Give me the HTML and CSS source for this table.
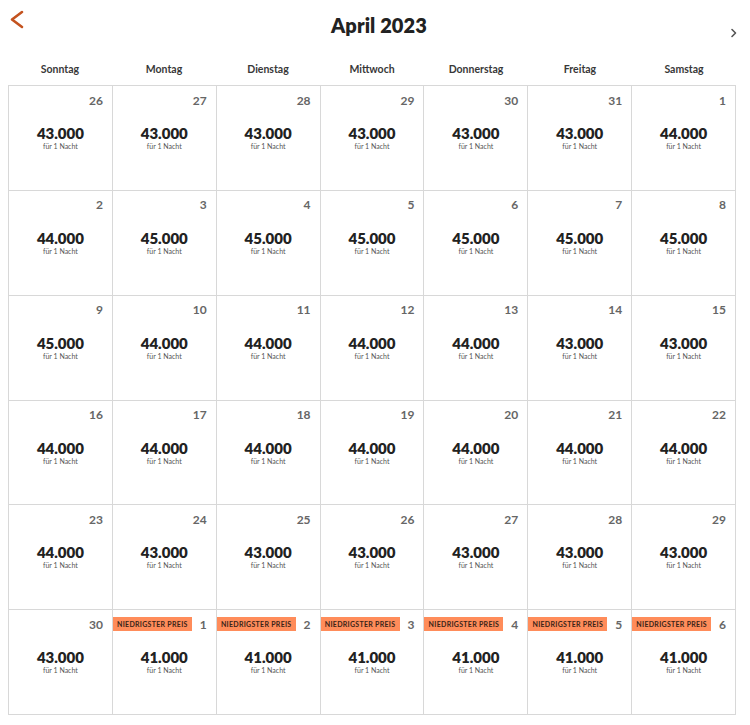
FILE: index.html
```html
<!DOCTYPE html>
<html lang="de">
<head>
<meta charset="utf-8">
<title>April 2023</title>
<link rel="stylesheet" href="styles.css">
</head>
<body>
<div class="cal">
  <div class="top">
    <button class="nav prev" aria-label="Vorheriger Monat">
      <svg width="16" height="20" viewBox="0 0 16 20"><polyline points="13,2 3,9.5 13,17" fill="none" stroke="#c4531f" stroke-width="2.6" stroke-linecap="round" stroke-linejoin="round"/></svg>
    </button>
    <h1 class="title">April 2023</h1>
    <button class="nav next" aria-label="Nächster Monat">
      <svg width="8" height="10" viewBox="0 0 8 10"><polyline points="2,1.5 5.5,5 2,8.5" fill="none" stroke="#555" stroke-width="1.6" stroke-linecap="round" stroke-linejoin="round"/></svg>
    </button>
  </div>
  <div class="weekdays">
    <div>Sonntag</div><div>Montag</div><div>Dienstag</div><div>Mittwoch</div><div>Donnerstag</div><div>Freitag</div><div>Samstag</div>
  </div>
  <div class="grid" id="grid"></div>
</div>
<script>
var data = [
  [26,"43.000"],[27,"43.000"],[28,"43.000"],[29,"43.000"],[30,"43.000"],[31,"43.000"],[1,"44.000"],
  [2,"44.000"],[3,"45.000"],[4,"45.000"],[5,"45.000"],[6,"45.000"],[7,"45.000"],[8,"45.000"],
  [9,"45.000"],[10,"44.000"],[11,"44.000"],[12,"44.000"],[13,"44.000"],[14,"43.000"],[15,"43.000"],
  [16,"44.000"],[17,"44.000"],[18,"44.000"],[19,"44.000"],[20,"44.000"],[21,"44.000"],[22,"44.000"],
  [23,"44.000"],[24,"43.000"],[25,"43.000"],[26,"43.000"],[27,"43.000"],[28,"43.000"],[29,"43.000"],
  [30,"43.000"],[1,"41.000",1],[2,"41.000",1],[3,"41.000",1],[4,"41.000",1],[5,"41.000",1],[6,"41.000",1]
];
var g = document.getElementById('grid');
var html = '';
data.forEach(function(d){
  html += '<div class="cell"><div class="head">' +
    (d[2] ? '<span class="badge">NIEDRIGSTER PREIS</span>' : '<span></span>') +
    '<span class="date">' + d[0] + '</span></div>' +
    '<div class="price">' + d[1] + '</div><div class="note">für 1 Nacht</div></div>';
});
g.innerHTML = html;
</script>
</body>
</html>
```

FILE: styles.css
```css
* { box-sizing: border-box; }
html, body { margin: 0; padding: 0; background: #fff; }
body { font-family: Lato, "Open Sans", sans-serif; color: #222; }

.cal { width: 750px; padding-left: 8px; }

.top {
  display: grid;
  grid-template-columns: 1fr auto 1fr;
  height: 55px;
  width: 742px;
}
.nav { background: none; border: 0; padding: 0; cursor: pointer; line-height: 0; }
.prev { justify-self: start; align-self: start; margin-top: 10px; margin-left: 1px; }
.next { justify-self: end; align-self: start; margin-top: 28px; margin-right: 12px; }
.title {
  margin: 0;
  padding-top: 13px;
  font-size: 20px;
  font-weight: 800;
  color: #222;
  letter-spacing: 0.1px;
}

.weekdays {
  display: grid;
  grid-template-columns: repeat(7, 1fr);
  width: 728px;
  height: 30px;
  font-size: 10.5px;
  font-weight: 700;
  color: #383838;
  text-align: center;
  padding-top: 8px;
}

.grid {
  display: grid;
  grid-template-columns: repeat(7, 1fr);
  grid-template-rows: repeat(6, 1fr);
  width: 728px;
  height: 630px;
  border-left: 1px solid #d8d8d8;
  border-top: 1px solid #d8d8d8;
}
.cell {
  border-right: 1px solid #d8d8d8;
  border-bottom: 1px solid #d8d8d8;
  text-align: center;
}
.head {
  display: flex;
  justify-content: space-between;
  align-items: center;
  height: 14px;
  margin-top: 7px;
  padding-right: 9px;
}
.date { font-size: 12px; font-weight: 700; color: #666; }
.badge {
  background: #ff8c5a;
  color: #3a2418;
  font-size: 7px;
  font-weight: 700;
  height: 14px;
  line-height: 14px;
  width: 79px;
  padding: 0;
  text-align: center;
  white-space: nowrap;
  letter-spacing: 0.3px;
}
.price {
  margin-top: 17px;
  font-size: 15px;
  font-weight: 800;
  color: #222;
  line-height: 18px;
}
.note { font-size: 7px; color: #555; line-height: 9px; }
```
